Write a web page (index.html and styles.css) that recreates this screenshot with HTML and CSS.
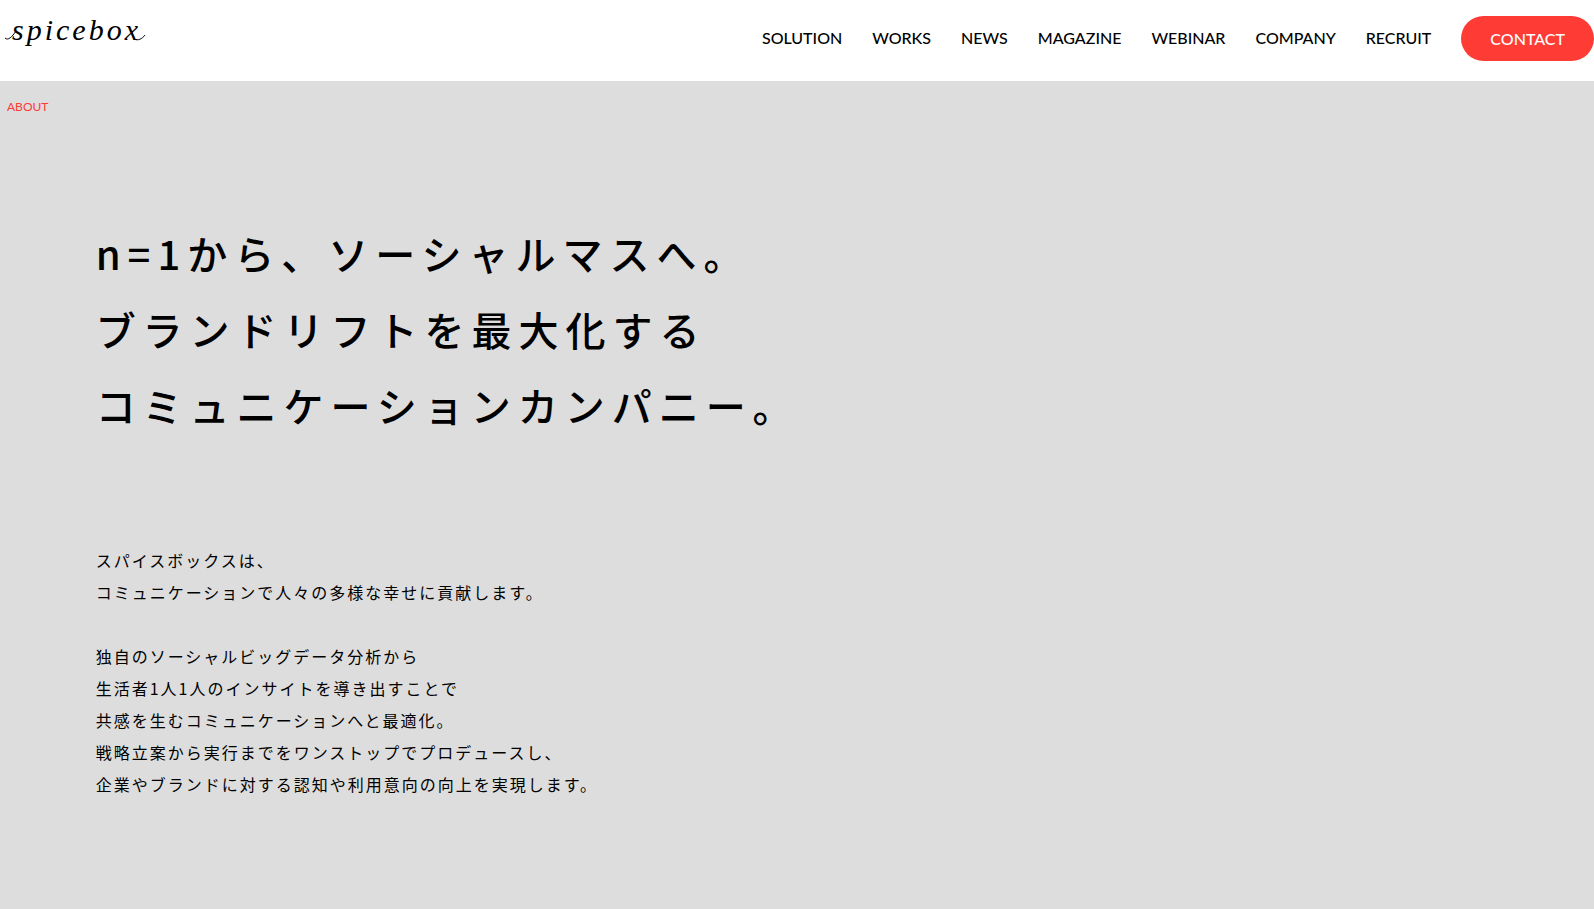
FILE: index.html
```html
<!DOCTYPE html>
<html lang="ja">
<head>
    <meta charset="UTF-8">
    <meta name="viewport" content="width=device-width, initial-scale=1.0">
    <title>spicebox</title>
    <link rel="stylesheet" href="styles.css">
</head>
<body>
    <header class="header">
        <a class="logo" href="#">
            <svg width="148" height="56" viewBox="0 0 148 56" role="img" aria-label="spicebox">
                <text class="logo-text" x="12" y="40">spicebox</text>
                <!-- entry and exit swashes -->
                <path class="logo-swash" d="M5 38 C8 41 12 37 16 31"/>
                <path class="logo-swash" d="M134 39 C138 41 142 39 145 35"/>
            </svg>
        </a>
        <nav class="nav">
            <a href="#">SOLUTION</a>
            <a href="#">WORKS</a>
            <a href="#">NEWS</a>
            <a href="#">MAGAZINE</a>
            <a href="#">WEBINAR</a>
            <a href="#">COMPANY</a>
            <a href="#">RECRUIT</a>
            <a class="contact" href="#">CONTACT</a>
        </nav>
    </header>

    <main class="about">
        <p class="label">ABOUT</p>
        <div class="content">
            <h1 class="title">n=1から、ソーシャルマスへ。<br>ブランドリフトを最大化する<br>コミュニケーションカンパニー。</h1>
            <p class="text">スパイスボックスは、<br>コミュニケーションで人々の多様な幸せに貢献します。</p>
            <p class="text">独自のソーシャルビッグデータ分析から<br>生活者1人1人のインサイトを導き出すことで<br>共感を生むコミュニケーションへと最適化。<br>戦略立案から実行までをワンストップでプロデュースし、<br>企業やブランドに対する認知や利用意向の向上を実現します。</p>
        </div>
    </main>
</body>
</html>
```

FILE: styles.css
```css
* {
    box-sizing: border-box;
}
body {
    margin: 0;
    min-height: 100vh;
    display: flex;
    flex-direction: column;
    background-color: #fff;
    color: #000;
    font-family: "Noto Sans CJK JP", sans-serif;
}
a {
    color: inherit;
    text-decoration: none;
}
h1, p {
    margin: 0;
}
.header {
    display: flex;
    justify-content: space-between;
    align-items: flex-start;
    height: 81px;
}
.logo svg {
    display: block;
}
.logo-text {
    font-family: "Liberation Serif", serif;
    font-style: italic;
    font-size: 30px;
    letter-spacing: 3px;
}
.logo-swash {
    fill: none;
    stroke: #000;
    stroke-width: 1;
}
.nav {
    display: flex;
    align-items: flex-start;
    gap: 30px;
    padding-top: 16px;
    font-family: Lato, sans-serif;
    font-size: 16px;
    font-weight: 500;
    line-height: 43px;
}
.contact {
    padding: 0 29px;
    border-radius: 23px;
    background-color: #ff3b35;
    color: #fff;
    line-height: 45px;
}
.about {
    flex: 1;
    padding: 17px 0 100px;
    background-color: #ddd;
}
.label {
    padding-left: 7px;
    color: #ff3b35;
    font-family: Lato, sans-serif;
    font-size: 12px;
    line-height: 18px;
}
.content {
    padding: 99px 6% 0;
}
.title {
    margin-bottom: 101px;
    font-size: 40px;
    font-weight: 500;
    line-height: 76px;
    letter-spacing: 7px;
}
.text {
    font-size: 16px;
    font-weight: 400;
    line-height: 32px;
    letter-spacing: 2px;
}
.text + .text {
    margin-top: 32px;
}
```
